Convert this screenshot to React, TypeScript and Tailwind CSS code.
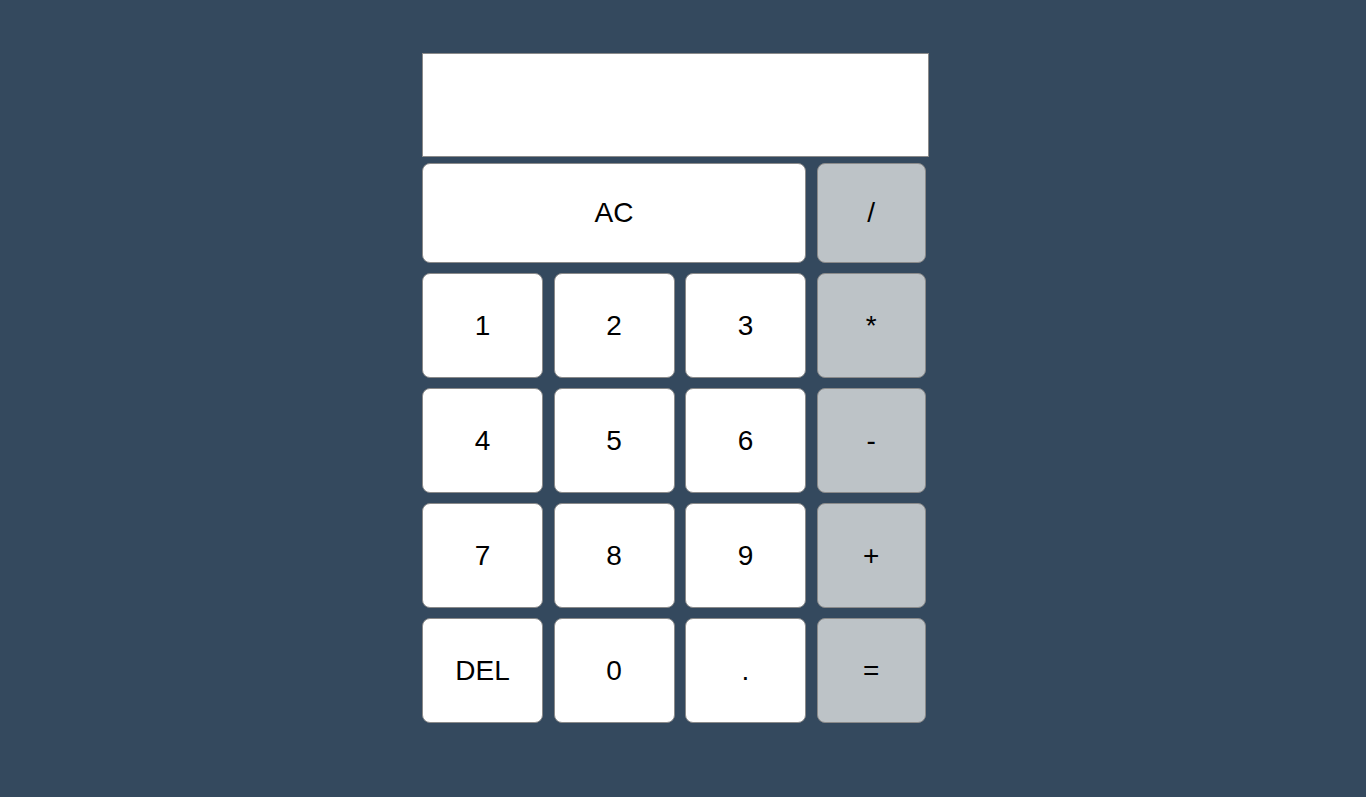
import React from "react";

const Btn = ({ label, op = false, className = "" }: { label: string; op?: boolean; className?: string }) => (
  <button
    className={`flex items-center justify-center rounded-[8px] border border-[#8a8a8a] text-[28px] text-black ${op ? "bg-[#bdc3c7]" : "bg-white"} ${className}`}
    style={{ fontFamily: '"Liberation Sans", Arial, sans-serif' }}
  >
    {label}
  </button>
);

export default function App() {
  const rows = [
    ["1", "2", "3", "*"],
    ["4", "5", "6", "-"],
    ["7", "8", "9", "+"],
    ["DEL", "0", ".", "="],
  ];
  return (
    <div className="min-h-[797px] w-full bg-[#34495e] pt-[53px]">
      <div className="ml-[422px] flex w-[507px] flex-col">
        <div className="h-[104px] w-[507px] border border-[#8a8a8a] bg-white" />
        <div className="mt-[6px] flex gap-[10.5px]">
          <Btn label="AC" className="h-[100px] w-[384px]" />
          <Btn label="/" op className="h-[100px] w-[109.5px]" />
        </div>
        {rows.map((r, i) => (
          <div key={i} className="mt-[10px] flex gap-[10.5px]">
            {r.map((k, j) => (
              <Btn key={k} label={k} op={j === 3} className={`h-[105px] ${j === 3 ? "w-[109.5px]" : "w-[121px]"}`} />
            ))}
          </div>
        ))}
      </div>
    </div>
  );
}
